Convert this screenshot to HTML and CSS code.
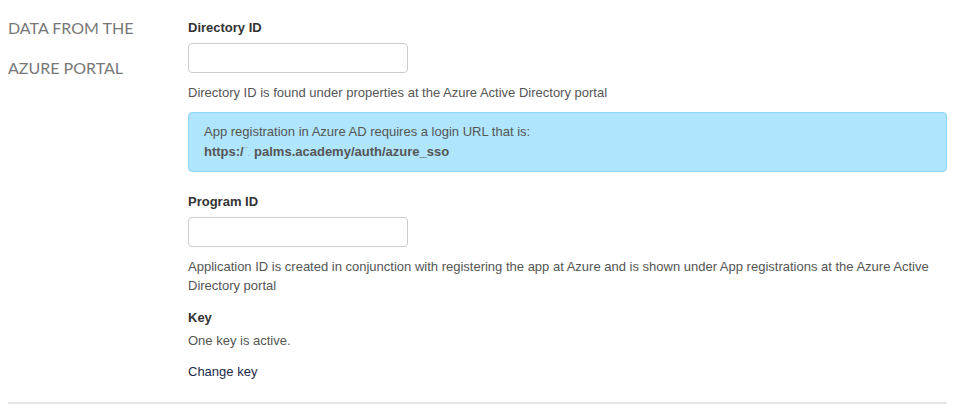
FILE: index.html
```html
<!DOCTYPE html>
<html lang="en">

<head>
    <meta charset="UTF-8">
    <meta name="viewport" content="width=device-width, initial-scale=1.0">
    <title>Azure SSO</title>
    <link rel="stylesheet" href="styles.css">
</head>

<body>
    <section class="settings">
        <div class="row">
            <h2 class="section-title">Data from the Azure portal</h2>
            <form class="fields">
                <label class="field-label" for="directory">Directory ID</label>
                <input type="text" id="directory" class="field-input">
                <p class="help">Directory ID is found under properties at the Azure Active Directory portal</p>

                <div class="alert">
                    <p>App registration in Azure AD requires a login URL that is:</p>
                    <p class="url">https:/<span class="redacted">&#8254;.</span> palms.academy/auth/azure_sso</p>
                </div>

                <label class="field-label spaced" for="program">Program ID</label>
                <input type="text" id="program" class="field-input">
                <p class="help">Application ID is created in conjunction with registering the app at Azure and is shown under App registrations at the Azure Active Directory portal</p>

                <div class="field-label key-label">Key</div>
                <p class="key-status">One key is active.</p>
                <a href="#" class="change-key">Change key</a>
            </form>
        </div>
        <hr class="divider">
    </section>
</body>

</html>
```

FILE: styles.css
```css
body {
    font-family: "Liberation Sans", Arial, sans-serif;
    font-size: 13px;
    color: #555;
    margin: 8px;
    background: #fff;
}

.settings {
    margin-right: 16px;
}

.row {
    display: flex;
}

.section-title {
    width: 150px;
    flex-shrink: 0;
    margin: 0 30px 0 0;
    font-family: Lato, "Open Sans", sans-serif;
    font-weight: normal;
    font-size: 16px;
    line-height: 40px;
    text-transform: uppercase;
    color: #777;
}

.fields {
    flex: 1;
    display: flex;
    flex-direction: column;
    align-items: flex-start;
}

.field-label {
    display: block;
    margin-top: 10px;
    font-weight: bold;
    color: #333;
    line-height: 20px;
}

.field-label.spaced {
    margin-top: 20px;
}

.field-input {
    width: 220px;
    height: 30px;
    box-sizing: border-box;
    margin-top: 5px;
    padding: 4px 8px;
    border: 1px solid #ccc;
    border-radius: 4px;
}

.help {
    margin: 10px 0 0;
    line-height: 19px;
}

.alert {
    align-self: stretch;
    margin-top: 10px;
    padding: 9px 15px;
    background-color: #afe5fd;
    border: 1px solid #8dd8f8;
    border-radius: 4px;
}

.alert p {
    margin: 0;
    line-height: 20px;
}

.alert .url {
    font-weight: bold;
}

.redacted {
    color: #9fb3bd;
    font-weight: normal;
    font-size: 11px;
}

.key-label {
    margin-top: 13px;
}

.key-status {
    margin: 3px 0 0;
    line-height: 20px;
}

.change-key {
    margin-top: 11px;
    line-height: 20px;
    color: #1c2b4a;
    text-decoration: none;
}

.divider {
    margin: 20px 0 0;
    border: none;
    border-top: 2px solid #e5e5e5;
}
```
